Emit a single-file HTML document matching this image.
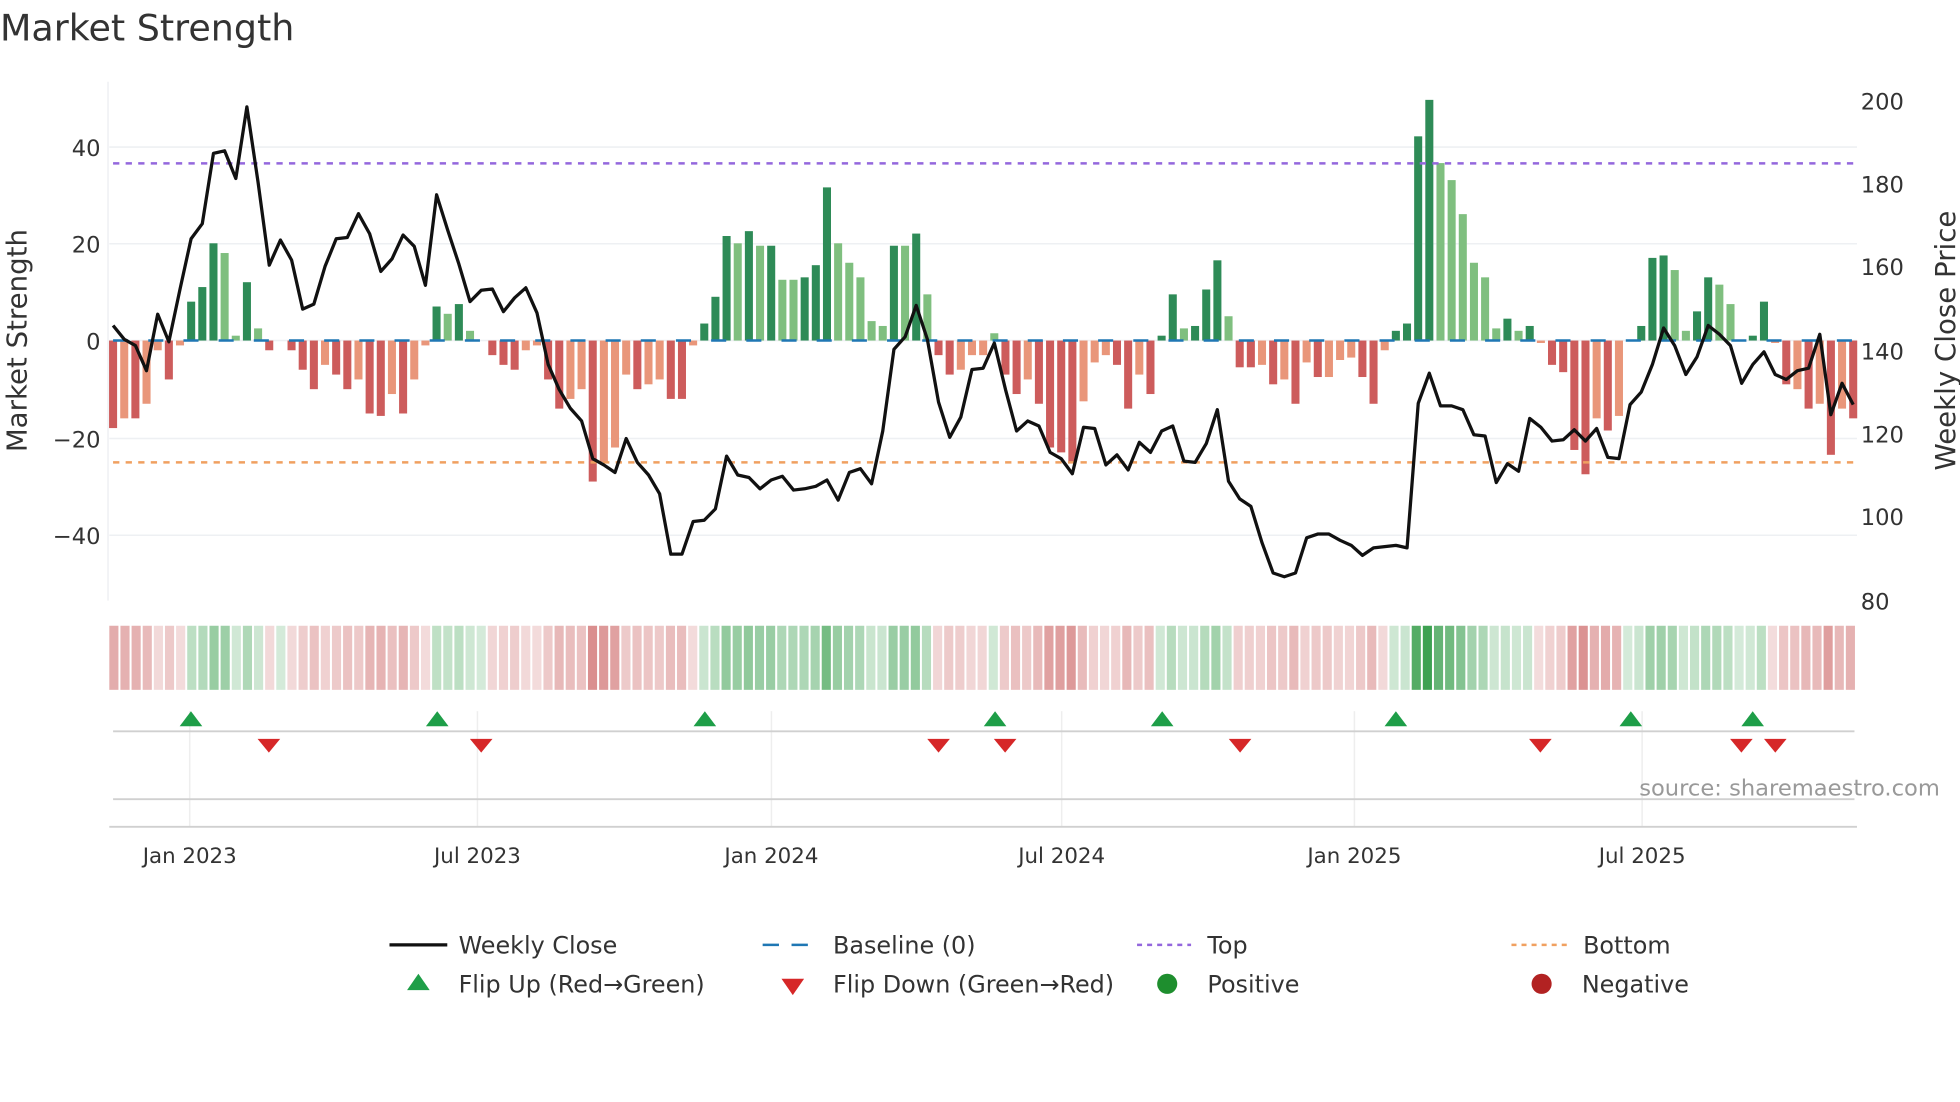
<!DOCTYPE html>
<html><head><meta charset="utf-8"><style>
html,body{margin:0;padding:0;background:#fff;width:1960px;height:1102px;overflow:hidden}
svg text{font-family:"DejaVu Sans","Liberation Sans",sans-serif;fill:#333}
</style></head><body>
<svg id="s" width="1960" height="1102" viewBox="0 0 1560 877" xmlns="http://www.w3.org/2000/svg">
<text x="0" y="32" font-size="29">Market Strength</text>
<g stroke="#eef0f3" stroke-width="1.2">
<line x1="87" x2="1478" y1="117" y2="117"/><line x1="87" x2="1478" y1="194" y2="194"/><line x1="87" x2="1478" y1="271" y2="271"/><line x1="87" x2="1478" y1="349" y2="349"/><line x1="87" x2="1478" y1="426" y2="426"/>
<line x1="86" x2="86" y1="65" y2="478"/>
</g>
<g font-size="18" text-anchor="end">
<text x="80" y="124">40</text><text x="80" y="201">20</text><text x="80" y="278">0</text><text x="80" y="356">−20</text><text x="80" y="433">−40</text>
</g>
<g font-size="18">
<text x="1481" y="87">200</text><text x="1481" y="153">180</text><text x="1481" y="219">160</text><text x="1481" y="286">140</text><text x="1481" y="352">120</text><text x="1481" y="418">100</text><text x="1481" y="485">80</text>
</g>
<text font-size="22" transform="translate(21,271) rotate(-90)" text-anchor="middle">Market Strength</text>
<text font-size="22" transform="translate(1556,271) rotate(-90)" text-anchor="middle">Weekly Close Price</text>
<g id="bars"></g>
<line x1="90" x2="1476" y1="271" y2="271" stroke="#1f77b4" stroke-width="2" stroke-dasharray="12 16"/>
<line x1="90" x2="1476" y1="130" y2="130" stroke="#9467dd" stroke-width="2" stroke-dasharray="5 5"/>
<line x1="90" x2="1476" y1="368" y2="368" stroke="#f0a060" stroke-width="2" stroke-dasharray="5 5"/>
<polyline id="price" fill="none" stroke="#111" stroke-width="2.6" stroke-linejoin="round"/>
<g id="heat"></g>
<g stroke="#eee" stroke-width="1.2">
<line x1="151" x2="151" y1="566" y2="658"/><line x1="380" x2="380" y1="566" y2="658"/><line x1="614" x2="614" y1="566" y2="658"/><line x1="845" x2="845" y1="566" y2="658"/><line x1="1078" x2="1078" y1="566" y2="658"/><line x1="1307" x2="1307" y1="566" y2="658"/>
</g>
<line x1="90" x2="1476" y1="582" y2="582" stroke="#d0d0d0" stroke-width="1.5"/>
<line x1="90" x2="1476" y1="636" y2="636" stroke="#d0d0d0" stroke-width="1.5"/>
<line x1="87" x2="1478" y1="658" y2="658" stroke="#d0d0d0" stroke-width="1.5"/>
<g id="marks"></g>
<text x="1544" y="633" font-size="18" text-anchor="end" style="fill:#999">source: sharemaestro.com</text>
<g font-size="17" text-anchor="middle">
<text x="151" y="687">Jan 2023</text><text x="380" y="687">Jul 2023</text><text x="614" y="687">Jan 2024</text><text x="845" y="687">Jul 2024</text><text x="1078" y="687">Jan 2025</text><text x="1307" y="687">Jul 2025</text>
</g>
<g font-size="19">
<line x1="310" x2="356" y1="752" y2="752" stroke="#111" stroke-width="2.6"/><text x="365" y="759">Weekly Close</text>
<line x1="607" x2="650" y1="752" y2="752" stroke="#1f77b4" stroke-width="2" stroke-dasharray="13 10"/><text x="663" y="759">Baseline (0)</text>
<line x1="905" x2="948" y1="752" y2="752" stroke="#9467dd" stroke-width="2" stroke-dasharray="4 4"/><text x="961" y="759">Top</text>
<line x1="1203" x2="1247" y1="752" y2="752" stroke="#f0a060" stroke-width="2" stroke-dasharray="4 4"/><text x="1260" y="759">Bottom</text>
<polygon points="324,788 342,788 333,775" fill="#1e9e48"/><text x="365" y="790">Flip Up (Red→Green)</text>
<polygon points="622,779 640,779 631,792" fill="#d62728"/><text x="663" y="790">Flip Down (Green→Red)</text>
<circle cx="929" cy="783" r="8" fill="#1e8e2e"/><text x="961" y="790">Positive</text>
<circle cx="1227" cy="783" r="8" fill="#b22222"/><text x="1259" y="790">Negative</text>
</g>
</svg>
<script>
var v=[-18,-16,-16,-13,-2,-8,-1,8,11,20,18,1,12,2.5,-2,0,-2,-6,-10,-5,-7,-10,-8,-15,-15.5,-11,-15,-8,-1,7,5.5,7.5,2,0,-3,-5,-6,-2,-1,-8,-14,-12,-10,-29,-25,-22,-7,-10,-9,-8,-12,-12,-1,3.5,9,21.5,20,22.5,19.5,19.5,12.5,12.5,13,15.5,31.5,20,16,13,4,3,19.5,19.5,22,9.5,-3,-7,-6,-3,-3,1.5,-7,-11,-8,-13,-22,-23,-25,-12.5,-4.5,-3,-5,-14,-7,-11,1,9.5,2.5,3,10.5,16.5,5,-5.5,-5.5,-5,-9,-8,-13,-4.5,-7.5,-7.5,-4,-3.5,-7.5,-13,-2,2,3.5,42,49.5,36.5,33,26,16,13,2.5,4.5,2,3,-0.5,-5,-6.5,-22.5,-27.5,-16,-18.5,-15.5,0,3,17,17.5,14.5,2,6,13,11.5,7.5,0,1,8,-0.5,-9,-10,-14,-13,-23.5,-14,-16];
var dark=[1,0,1,0,0,1,0,1,1,1,0,0,1,0,1,0,1,1,1,0,1,1,0,1,1,0,1,0,0,1,0,1,0,0,1,1,1,0,0,1,1,0,0,1,0,0,0,1,0,0,1,1,0,1,1,1,0,1,0,1,0,0,1,1,1,0,0,0,0,0,1,0,1,0,1,1,0,0,0,0,1,1,0,1,1,1,1,0,0,0,1,1,0,1,1,1,0,1,1,1,0,1,1,0,1,0,1,0,1,0,0,0,1,1,0,1,1,1,1,0,0,0,0,0,0,1,0,1,0,1,1,1,1,0,1,0,0,1,1,1,0,0,1,1,0,0,0,1,1,0,1,0,1,0,1,0,1];
var ns="http://www.w3.org/2000/svg";
function el(t,a,p){var e=document.createElementNS(ns,t);for(var k in a)e.setAttribute(k,a[k]);document.getElementById(p).appendChild(e);}
var x0=90,st=(1475-90)/(v.length-1),hw=3.2;
for(var i=0;i<v.length;i++){var x=x0+i*st,val=v[i],h=Math.abs(val)*3.87,d=dark[i];
 var c=val>=0?(d?"#2e8b57":"#7fbf7f"):(d?"#cd5c5c":"#e9967a");
 if(h>0.3)el("rect",{x:x-hw,y:val>=0?271-h:271,width:hw*2,height:h,fill:c},"bars");
 var a,hc;
 if(val>=0){a=0.22+Math.min(val/50,1)*0.78;hc="rgba(60,160,80,"+a.toFixed(2)+")";}
 else{a=0.2+Math.min(-val/30,1)*0.5;hc="rgba(200,90,90,"+a.toFixed(2)+")";}
 el("rect",{x:(87+i*(1391/v.length)).toFixed(2),y:498,width:(1391/v.length-1.6).toFixed(2),height:51,fill:hc},"heat");
}
var py=[259,270,275,295,250,272,230,190,178,122,120,142,85,145,211,191,207,246,242,212,190,189,170,186,216,206,187,196,227,155,183,210,240,231,230,248,237,229,249,290,310,325,335,365,370,376,349,368,378,393,441,441,415,414,405,363,378,380,389,382,379,390,389,387,382,398,376,373,385,343,278,268,243,270,320,348,332,294,293,273,310,343,335,339,360,365,377,340,341,370,362,374,352,360,343,339,367,368,353,326,383,397,403,432,456,459,456,428,425,425,430,434,442,436,435,434,436,321,297,323,323,326,346,347,384,369,375,333,340,351,350,342,351,341,364,365,322,312,290,261,275,298,284,259,266,275,305,290,280,298,302,295,293,266,330,305,322];
var pst=(1475-90)/(py.length-1),pts=[];
for(var j=0;j<py.length;j++)pts.push((90+j*pst).toFixed(1)+","+py[j]);
document.getElementById("price").setAttribute("points",pts.join(" "));
[152,348,561,792,925,1111,1298,1395].forEach(function(x){el("polygon",{points:(x-9)+",578 "+(x+9)+",578 "+x+",566",fill:"#1e9e48"},"marks");});
[214,383,747,800,987,1226,1386,1413].forEach(function(x){el("polygon",{points:(x-9)+",588 "+(x+9)+",588 "+x+",599",fill:"#d62728"},"marks");});
</script>
</body></html>
